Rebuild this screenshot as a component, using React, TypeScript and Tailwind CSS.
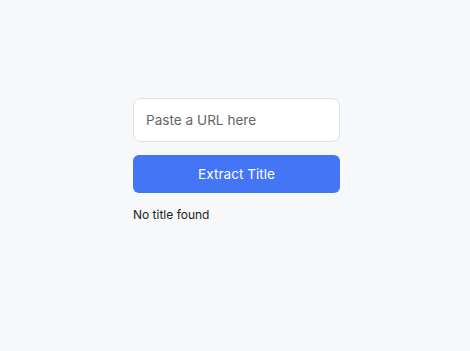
import { useState } from "react";

export default function App() {
  const [url, setUrl] = useState("");
  const [title] = useState<string | null>(null);

  return (
    <div
      className="min-h-screen bg-[#f7f8fa] pt-[98px]"
      style={{ fontFamily: "Inter, 'Noto Sans', sans-serif" }}
    >
      <div className="ml-[133px] flex w-[207px] flex-col">
        <input
          value={url}
          onChange={(e) => setUrl(e.target.value)}
          placeholder="Paste a URL here"
          className="h-[44px] w-full rounded-lg border border-[#dfe2e6] bg-white px-3 text-[13.6px] text-[#333] placeholder:text-[#666] outline-none"
        />
        <button className="mt-[13px] h-[38px] w-full rounded-md bg-[#4475f5] text-[13.6px] text-white">
          Extract Title
        </button>
        <p className="mt-[13px] text-[12px] text-[#222]">{title ?? "No title found"}</p>
      </div>
    </div>
  );
}
